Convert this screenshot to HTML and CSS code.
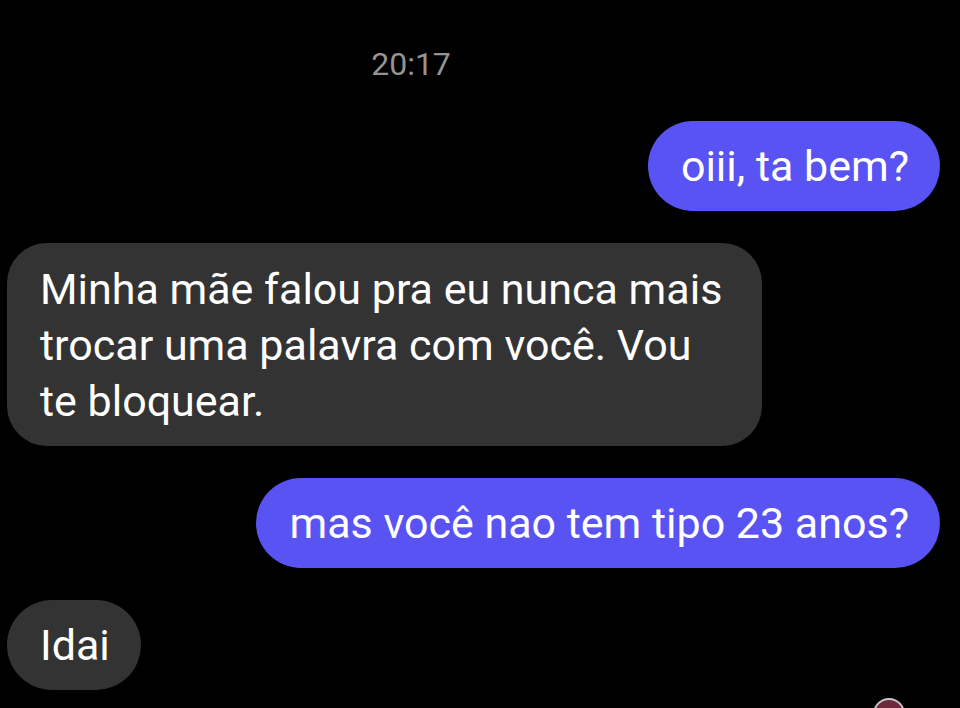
FILE: index.html
```html
<!DOCTYPE html>
<html lang="pt-BR">
<head>
    <meta charset="UTF-8">
    <meta name="viewport" content="width=device-width, initial-scale=1.0">
    <title>Conversa</title>

    <link rel="stylesheet" href="styles.css">
</head>
<body>
    <div class="chat">
        <div class="time">20:17</div>

        <div class="msg sent">oiii, ta bem?</div>
        <div class="msg received wide">Minha mãe falou pra eu nunca mais trocar uma palavra com você. Vou te bloquear.</div>
        <div class="msg sent">mas você nao tem tipo 23 anos?</div>
        <div class="msg received">Idai</div>

        <div class="seen"></div>
    </div>
</body>
</html>
```

FILE: styles.css
```css
body{
    margin: 0;
    background-color: #000;
    font-family: Roboto, "Liberation Sans", Arial, sans-serif;
    overflow: hidden;
}

.chat{
    display: flex;
    flex-direction: column;
    gap: 32px;
    padding: 47px 20px 0 7px;
    height: 708px;
    box-sizing: border-box;
}

.time{
    align-self: center;
    margin-right: 125px;
    margin-bottom: 8px;
    color: #949494;
    font-size: 32px;
    line-height: 34px;
}

.msg{
    flex-shrink: 0;
    box-sizing: border-box;
    max-width: 760px;
    padding: 17px 31px 17px 33px;
    font-size: 43px;
    line-height: 56px;
    color: #fff;
    border-radius: 45px;
}

.sent{
    align-self: flex-end;
    background-color: #5a53f4;
}

.received{
    align-self: flex-start;
    background-color: #333333;
}

.wide{
    width: 755px;
    padding-top: 18px;
    padding-bottom: 17px;
    border-radius: 40px;
}

.seen{
    flex-shrink: 0;
    align-self: flex-end;
    width: 28px;
    height: 28px;
    margin: -24px 35px 0 0;
    border: 2px solid #c9c4cc;
    border-radius: 50%;
    background-color: #6d2a3c;
}
```
